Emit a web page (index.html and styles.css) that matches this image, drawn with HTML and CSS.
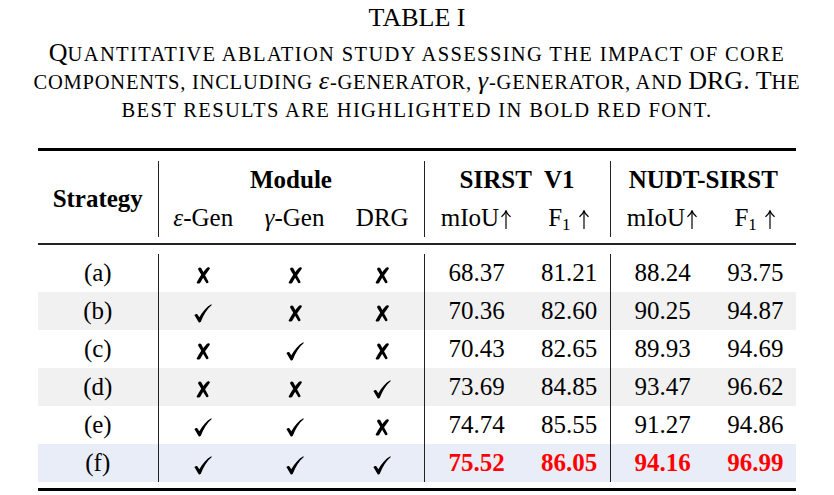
FILE: index.html
```html
<!DOCTYPE html>
<html>
<head>
<meta charset="utf-8">
<link rel="stylesheet" href="styles.css">
</head>
<body>
<div class="title">TABLE I</div>
<div class="caption">
  <div class="cline"><span class="big">Q</span><span class="sc">uantitative ablation study assessing the impact of core</span></div>
  <div class="cline tight"><span class="sc">components, including </span><span class="math">ε</span><span class="sc">-generator, </span><span class="math">γ</span><span class="sc">-generator, and </span><span class="big">DRG. T</span><span class="sc">he</span></div>
  <div class="cline"><span class="sc">best results are highlighted in bold red font.</span></div>
</div>
<table class="tbl">
  <colgroup>
    <col class="c-strat"><col class="c-eps"><col class="c-gam"><col class="c-drg">
    <col class="c-miou"><col class="c-f1"><col class="c-miou"><col class="c-f1">
  </colgroup>
  <tr class="rule thick"><td colspan="8"></td></tr>
  <tr class="gap g10"><td colspan="8"></td></tr>
  <tr class="hrow">
    <th rowspan="2">Strategy</th>
    <th colspan="3" class="vl">Module</th>
    <th colspan="2" class="vl">SIRST&nbsp; V1</th>
    <th colspan="2" class="vl">NUDT-SIRST</th>
  </tr>
  <tr class="hrow">
    <td class="vl"><i class="math">ε</i>-Gen</td>
    <td><i class="math">γ</i>-Gen</td>
    <td>DRG</td>
    <td class="vl">mIoU<svg class="arr" viewBox="0 0 12 19"><use href="#uparrow"/></svg></td>
    <td>F<sub>1</sub> <svg class="arr" viewBox="0 0 12 19"><use href="#uparrow"/></svg></td>
    <td class="vl">mIoU<svg class="arr" viewBox="0 0 12 19"><use href="#uparrow"/></svg></td>
    <td>F<sub>1</sub> <svg class="arr" viewBox="0 0 12 19"><use href="#uparrow"/></svg></td>
  </tr>
  <tr class="gap g6"><td colspan="8"></td></tr>
  <tr class="rule thin"><td colspan="8"></td></tr>
  <tr class="gap g9"><td colspan="8"></td></tr>
  <tr class="row">
    <td>(a)</td>
    <td class="vl"><svg class="xm" viewBox="0 0 14 17"><use href="#cross"/></svg></td>
    <td><svg class="xm" viewBox="0 0 14 17"><use href="#cross"/></svg></td>
    <td><svg class="xm" viewBox="0 0 14 17"><use href="#cross"/></svg></td>
    <td class="vl">68.37</td><td>81.21</td><td class="vl">88.24</td><td>93.75</td>
  </tr>
  <tr class="row alt">
    <td>(b)</td>
    <td class="vl"><svg class="ck" viewBox="0 0 18 19"><use href="#check"/></svg></td>
    <td><svg class="xm" viewBox="0 0 14 17"><use href="#cross"/></svg></td>
    <td><svg class="xm" viewBox="0 0 14 17"><use href="#cross"/></svg></td>
    <td class="vl">70.36</td><td>82.60</td><td class="vl">90.25</td><td>94.87</td>
  </tr>
  <tr class="row">
    <td>(c)</td>
    <td class="vl"><svg class="xm" viewBox="0 0 14 17"><use href="#cross"/></svg></td>
    <td><svg class="ck" viewBox="0 0 18 19"><use href="#check"/></svg></td>
    <td><svg class="xm" viewBox="0 0 14 17"><use href="#cross"/></svg></td>
    <td class="vl">70.43</td><td>82.65</td><td class="vl">89.93</td><td>94.69</td>
  </tr>
  <tr class="row alt">
    <td>(d)</td>
    <td class="vl"><svg class="xm" viewBox="0 0 14 17"><use href="#cross"/></svg></td>
    <td><svg class="xm" viewBox="0 0 14 17"><use href="#cross"/></svg></td>
    <td><svg class="ck" viewBox="0 0 18 19"><use href="#check"/></svg></td>
    <td class="vl">73.69</td><td>84.85</td><td class="vl">93.47</td><td>96.62</td>
  </tr>
  <tr class="row">
    <td>(e)</td>
    <td class="vl"><svg class="ck" viewBox="0 0 18 19"><use href="#check"/></svg></td>
    <td><svg class="ck" viewBox="0 0 18 19"><use href="#check"/></svg></td>
    <td><svg class="xm" viewBox="0 0 14 17"><use href="#cross"/></svg></td>
    <td class="vl">74.74</td><td>85.55</td><td class="vl">91.27</td><td>94.86</td>
  </tr>
  <tr class="row best">
    <td>(f)</td>
    <td class="vl"><svg class="ck" viewBox="0 0 18 19"><use href="#check"/></svg></td>
    <td><svg class="ck" viewBox="0 0 18 19"><use href="#check"/></svg></td>
    <td><svg class="ck" viewBox="0 0 18 19"><use href="#check"/></svg></td>
    <td class="vl red">75.52</td><td class="red">86.05</td><td class="vl red">94.16</td><td class="red">96.99</td>
  </tr>
  <tr class="gap g6"><td colspan="8"></td></tr>
  <tr class="rule thick"><td colspan="8"></td></tr>
</table>
<svg class="defs" width="0" height="0" aria-hidden="true">
  <defs>
    <path id="check" d="M0.5,11 C1.5,10 2.6,9.6 3.3,10.3 L5.3,13.3 C8.5,7.6 12.5,3 17.3,0.3 L17.8,0.9 C13,5 9.6,10.6 6.8,17.7 C6.4,18.6 5,18.8 4.5,18 L1,12 C0.7,11.6 0.5,11.3 0.5,11 Z"/>
    <g id="cross">
      <path d="M2.2,1.6 C2.8,0.4 4.6,0.2 5.3,1.3 L12.4,14.6 C12.9,15.8 11.3,16.9 10.3,16 L2.4,3 C2.1,2.5 2,2 2.2,1.6 Z"/>
      <path d="M11,0.8 C12,-0.2 14.2,0.3 13.8,1.8 C10.6,6.5 6.8,11 4.4,15.6 C3.7,17 1,16.9 0.6,15.4 C3.5,10 7,5 11,0.8 Z"/>
    </g>
    <g id="uparrow" fill="none" stroke="#000" stroke-width="1.2" stroke-linecap="round">
      <path d="M6,18.5 L6,1.5"/>
      <path d="M1.8,6.5 Q5,4 6,0.8 Q7,4 10.2,6.5"/>
    </g>
  </defs>
</svg>
</body>
</html>
```
FILE: styles.css
```css
html, body {
  margin: 0;
  padding: 0;
  background: #fff;
  color: #000;
  font-family: "Liberation Serif", "Times New Roman", serif;
}
.title {
  text-align: center;
  font-size: 26px;
  line-height: 30px;
  padding-top: 3px;
}
.caption {
  margin-top: 6px;
  text-align: center;
  font-size: 26px;
}
.cline {
  height: 28px;
  line-height: 28px;
  white-space: nowrap;
}
.caption span { line-height: 1; }
.caption .sc {
  text-transform: uppercase;
  font-size: 0.79em;
  letter-spacing: 1.35px;
}
.caption .tight .sc { letter-spacing: 0.75px; }
.caption .math {
  font-style: italic;
  margin-right: 1px;
}
.tbl {
  margin: 25px auto 0;
  border-collapse: collapse;
  table-layout: fixed;
  width: 758px;
  font-size: 25px;
}
.c-strat { width: 120px; }
.c-eps { width: 90px; }
.c-gam { width: 93px; }
.c-drg { width: 83px; }
.c-miou { width: 104.5px; }
.c-f1 { width: 81.5px; }
.tbl td, .tbl th {
  padding: 0;
  text-align: center;
  vertical-align: middle;
  white-space: nowrap;
}
.tbl th { font-weight: bold; }
.rule td { padding: 0; font-size: 0; line-height: 0; background: #000; }
.rule.thick td { height: 3px; }
.rule.thin td { height: 2px; background: #222; }
.gap td { padding: 0; font-size: 0; line-height: 0; }
.g10 td { height: 10px; }
.g9 td { height: 9px; }
.g6 td { height: 6px; }
.hrow { height: 38px; }
.hrow td, .hrow th { line-height: 30px; }
.row { height: 38px; }
.row td { line-height: 30px; }
.row.alt td { background: #f1f1f1; }
.row.best td { background: #e9edf7; }
.vl { border-left: 1px solid #222; }
.math { font-style: italic; }
.arr { width: 12px; height: 19px; vertical-align: -3px; margin-left: 1px; }
.tbl sub { font-size: 0.68em; line-height: 0; vertical-align: -0.25em; }
.ck { width: 18px; height: 19px; vertical-align: middle; fill: #000; }
.xm { width: 14px; height: 17px; vertical-align: middle; fill: #000; }
.defs { position: absolute; width: 0; height: 0; }
.red { color: #ff0000; font-weight: bold; }
```
